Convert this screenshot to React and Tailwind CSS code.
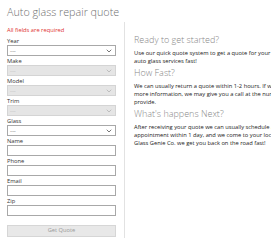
import { ChevronDown } from 'lucide-react';

const font = { fontFamily: '"Open Sans", "Liberation Sans", sans-serif' };

const Select = ({ disabled }) => (
  <div className={`h-[11px] border flex items-center justify-between pl-[2px] pr-[2px] ${disabled ? 'bg-[#e5e5e5] border-[#d4d4d4] text-[#bbb]' : 'bg-white border-[#a8a8a8] text-[#666]'}`}>
    <span className="text-[6px] leading-none">---</span>
    <ChevronDown size={8} strokeWidth={2} className={disabled ? 'text-[#aaa]' : 'text-[#333]'} />
  </div>
);

const Field = ({ label, children }) => (
  <div className="h-[20px]">
    <div className="text-[5.75px] h-[8px] leading-[8px] text-[#333]">{label}</div>
    {children}
  </div>
);

const Input = () => <div className="h-[11px] border border-[#a8a8a8] bg-white"></div>;

export default function App() {
  return (
    <div className="w-[271px] h-[245px] bg-white flex overflow-hidden" style={font}>
      <div className="w-[124px] pl-[7px] pr-[8px] shrink-0">
        <h1 className="text-[10.75px] font-light text-[#6f6f6f] leading-[14px] mt-[5px] whitespace-nowrap">Auto glass repair quote</h1>
        <p className="text-[5.75px] leading-[8px] text-[#e0322f] mt-[7px]">All fields are required</p>
        <div className="mt-[3px]">
          <Field label="Year"><Select /></Field>
          <Field label="Make"><Select disabled /></Field>
          <Field label="Model"><Select disabled /></Field>
          <Field label="Trim"><Select disabled /></Field>
          <Field label="Glass"><Select /></Field>
          <Field label="Name"><Input /></Field>
          <Field label="Phone"><Input /></Field>
          <Field label="Email"><Input /></Field>
          <Field label="Zip"><Input /></Field>
        </div>
        <button className="block mt-[8px] w-full h-[12px] bg-[#e8e8e8] border border-[#d6d6d6] text-[5.75px] text-[#999] leading-none">Get Quote</button>
      </div>
      <div className="w-px bg-[#e2e2e2] mt-[22px] h-[216px] shrink-0"></div>
      <div className="pl-[9px] pt-[35px] whitespace-nowrap">
        <h2 className="text-[9px] font-light text-[#888] leading-[10px]">Ready to get started?</h2>
        <p className="text-[5.75px] text-[#222] leading-[8px] mt-[4px]">Use our quick quote system to get a quote for your<br />auto glass services fast!</p>
        <h2 className="text-[9px] font-light text-[#888] leading-[10px] mt-[3px]">How Fast?</h2>
        <p className="text-[5.75px] text-[#222] leading-[8px] mt-[4px]">We can usually return a quote within 1-2 hours. If we need<br />more information, we may give you a call at the number you<br />provide.</p>
        <h2 className="text-[9px] font-light text-[#888] leading-[10px] mt-[3px]">What's happens Next?</h2>
        <p className="text-[5.75px] text-[#222] leading-[8px] mt-[4px]">After receiving your quote we can usually schedule an<br />appointment within 1 day, and we come to your location.<br />Glass Genie Co. we get you back on the road fast!</p>
      </div>
    </div>
  );
}
